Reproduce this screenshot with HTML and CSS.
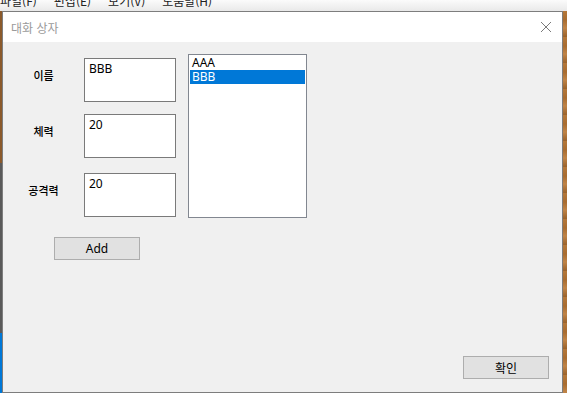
FILE: index.html
```html
<!DOCTYPE html>
<html lang="ko">
<head>
    <meta charset="UTF-8">
    <meta name="viewport" content="width=device-width, initial-scale=1.0">
    <title>대화 상자</title>
    <link rel="stylesheet" href="styles.css">
</head>
<body>
    <div class="menubar">
        <span>파일(F)</span>
        <span>편집(E)</span>
        <span>보기(V)</span>
        <span>도움말(H)</span>
    </div>
    <div class="desk">
        <div class="edge-left"></div>
        <div class="dialog">
            <div class="titlebar">
                <span class="title">대화 상자</span>
                <svg class="close" width="12" height="12" viewBox="0 0 12 12">
                    <path d="M1 1 L11 11 M11 1 L1 11" stroke="#7a7a7a" stroke-width="1" fill="none"/>
                </svg>
            </div>
            <div class="content">
                <div class="top">
                    <div class="fields">
                        <div class="row">
                            <label>이름</label>
                            <div class="textbox">BBB</div>
                        </div>
                        <div class="row">
                            <label>체력</label>
                            <div class="textbox">20</div>
                        </div>
                        <div class="row row-last">
                            <label>공격력</label>
                            <div class="textbox">20</div>
                        </div>
                    </div>
                    <ul class="listbox">
                        <li>AAA</li>
                        <li class="selected">BBB</li>
                    </ul>
                </div>
                <button class="btn btn-add">Add</button>
                <div class="footer">
                    <button class="btn">확인</button>
                </div>
            </div>
        </div>
        <div class="edge-right"></div>
    </div>
</body>
</html>
```

FILE: styles.css
```css
* {
    box-sizing: border-box;
}
html, body {
    height: 100%;
}
body {
    margin: 0;
    font-family: "Noto Sans", "Noto Sans CJK KR", sans-serif;
    font-size: 12px;
    color: #000;
    background: #b57a3a;
    display: flex;
    flex-direction: column;
    overflow: hidden;
}
.menubar {
    height: 11px;
    flex-shrink: 0;
    overflow: hidden;
    background: linear-gradient(#fbfbfb, #e9e9e9);
    display: flex;
    gap: 17px;
    font-family: "Noto Sans CJK KR", sans-serif;
    font-size: 12px;
    line-height: 12px;
    color: #222;
}
.menubar span {
    margin-top: -5px;
}
.desk {
    flex: 1;
    display: flex;
}
.edge-left {
    width: 2px;
    background: linear-gradient(#8b5a2b 0, #8b5a2b 152px, #5a5a5a 152px, #5a5a5a 322px, #0078d7 322px);
}
.edge-right {
    flex: 1;
    background: repeating-linear-gradient(#b5783a 0, #a86c30 9px, #c08447 17px, #9a622b 26px);
}
.dialog {
    width: 561px;
    height: 382px;
    border: 1px solid #7d7d7d;
    background: #f0f0f0;
    display: flex;
    flex-direction: column;
}
.titlebar {
    height: 30px;
    background: #fff;
    display: flex;
    align-items: center;
    justify-content: space-between;
    padding: 0 10px 0 8px;
}
.title {
    font-family: "Noto Sans CJK KR", sans-serif;
    font-size: 12px;
    color: #9a9a9a;
}
.content {
    flex: 1;
    display: flex;
    flex-direction: column;
}
.top {
    display: flex;
    margin-top: 12px;
}
.fields {
    display: flex;
    flex-direction: column;
    gap: 12px;
    margin-top: 4px;
}
.row {
    display: flex;
}
.row-last {
    margin-top: 3px;
}
label {
    width: 81px;
    padding-top: 10px;
    text-align: center;
    font-family: "Noto Sans CJK KR", sans-serif;
    font-size: 11px;
    font-weight: 500;
    line-height: 14px;
}
.textbox {
    width: 92px;
    height: 44px;
    border: 1px solid #7a7a7a;
    background: #fff;
    padding: 2px 4px 0 4px;
    line-height: 16px;
}
.listbox {
    list-style: none;
    margin: 0 0 0 12px;
    padding: 1px;
    width: 119px;
    height: 164px;
    border: 1px solid #828790;
    background: #fff;
}
.listbox li {
    height: 14px;
    line-height: 14px;
    padding-left: 2px;
}
.listbox .selected {
    background: #0078d7;
    color: #fff;
}
.btn {
    width: 86px;
    height: 23px;
    border: 1px solid #adadad;
    background: #e1e1e1;
    font-family: "Noto Sans", "Noto Sans CJK KR", sans-serif;
    font-size: 12px;
    color: #000;
    padding: 0;
}
.btn-add {
    margin: 19px 0 0 51px;
}
.footer {
    margin-top: auto;
    display: flex;
    justify-content: flex-end;
    padding: 0 13px 13px 0;
}
```
